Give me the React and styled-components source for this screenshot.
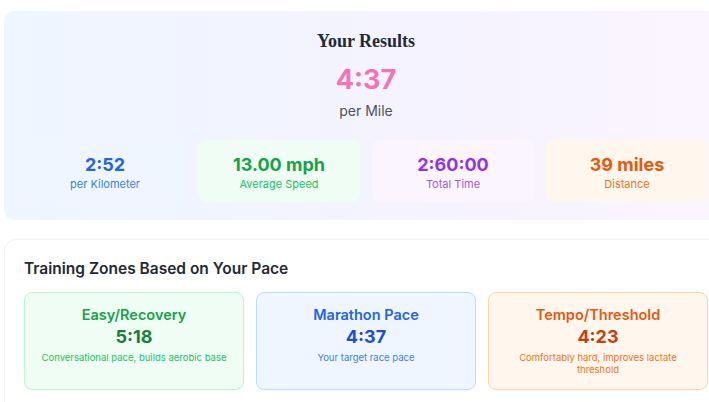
import React from "react";
import styled, { createGlobalStyle } from "styled-components";

const GlobalStyle = createGlobalStyle`
  html, body {
    margin: 0;
    padding: 0;
    background: #ffffff;
    overflow: hidden;
  }
  body {
    font-family: Inter, "Noto Sans", "Liberation Sans", sans-serif;
    -webkit-font-smoothing: antialiased;
  }
`;

const Page = styled.main`
  width: 724px;
  padding: 11px 0 0 4px;
  display: flex;
  flex-direction: column;
  gap: 19px;
`;

const ResultsCard = styled.section`
  border-radius: 10px;
  background: linear-gradient(90deg, #eff6ff 0%, #f5f3ff 60%, #fbf5ff 100%);
  padding: 18px 20px 18px;
  display: flex;
  flex-direction: column;
  align-items: center;
`;

const ResultsTitle = styled.h2`
  margin: 0;
  font-family: "Liberation Serif", "DejaVu Serif", serif;
  font-weight: 700;
  font-size: 18px;
  line-height: 24px;
  color: #1e293b;
`;

const MainPace = styled.div`
  margin-top: 9px;
  font-size: 27px;
  line-height: 36px;
  font-weight: 700;
  color: #f472b6;
`;

const MainUnit = styled.div`
  margin-top: 3px;
  font-size: 14px;
  line-height: 20px;
  color: #4b5563;
`;

const StatGrid = styled.div`
  margin-top: 19px;
  align-self: stretch;
  display: grid;
  grid-template-columns: repeat(4, 1fr);
  gap: 12px;
`;

const palette = {
  blue: { bg: "#eff6ff", border: "#bfdbfe", main: "#2563eb", dark: "#1d4ed8", soft: "#3b82f6" },
  green: { bg: "#f0fdf4", border: "#bbf7d0", main: "#16a34a", dark: "#15803d", soft: "#22c55e" },
  purple: { bg: "#faf5ff", border: "#e9d5ff", main: "#9333ea", dark: "#7e22ce", soft: "#a855f7" },
  orange: { bg: "#fff7ed", border: "#fed7aa", main: "#ea580c", dark: "#c2410c", soft: "#f97316" },
  red: { bg: "#fef2f2", border: "#fecaca", main: "#dc2626", dark: "#b91c1c", soft: "#ef4444" },
};

const StatBox = styled.div`
  height: 62px;
  border-radius: 8px;
  background: ${({ tone }) => palette[tone].bg};
  display: flex;
  flex-direction: column;
  align-items: center;
  justify-content: center;
  padding-top: 3px;
  box-sizing: border-box;
`;

const StatValue = styled.div`
  font-size: 18px;
  line-height: 22px;
  font-weight: 700;
  color: ${({ tone }) => palette[tone].main};
`;

const StatLabel = styled.div`
  font-size: 11px;
  line-height: 16px;
  color: ${({ tone }) => palette[tone].soft};
`;

const ZonesCard = styled.section`
  border: 1px solid #f1f2f4;
  border-radius: 12px;
  background: #ffffff;
  padding: 17px 19px 20px;
`;

const ZonesTitle = styled.h3`
  margin: 0 0 11px;
  font-size: 15.5px;
  line-height: 24px;
  font-weight: 600;
  color: #1f2937;
`;

const ZoneGrid = styled.div`
  display: grid;
  grid-template-columns: repeat(3, 1fr);
  gap: 12px;
`;

const ZoneCard = styled.div`
  border: 1px solid ${({ tone }) => palette[tone].border};
  background: ${({ tone }) => palette[tone].bg};
  border-radius: 8px;
  padding: 12px;
  text-align: center;
  min-height: 72px;
`;

const ZoneName = styled.div`
  font-size: 14.5px;
  line-height: 20px;
  font-weight: 600;
  color: ${({ tone }) => palette[tone].main};
`;

const ZonePace = styled.div`
  font-size: 18px;
  line-height: 24px;
  font-weight: 700;
  color: ${({ tone }) => palette[tone].dark};
`;

const ZoneNote = styled.div`
  margin-top: 3px;
  font-size: 9.5px;
  line-height: 12px;
  color: ${({ tone }) => palette[tone].soft};
`;

const stats = [
  { tone: "blue", value: "2:52", label: "per Kilometer" },
  { tone: "green", value: "13.00 mph", label: "Average Speed" },
  { tone: "purple", value: "2:60:00", label: "Total Time" },
  { tone: "orange", value: "39 miles", label: "Distance" },
];

const zones = [
  { tone: "green", name: "Easy/Recovery", pace: "5:18", note: "Conversational pace, builds aerobic base" },
  { tone: "blue", name: "Marathon Pace", pace: "4:37", note: "Your target race pace" },
  { tone: "orange", name: "Tempo/Threshold", pace: "4:23", note: "Comfortably hard, improves lactate threshold" },
  { tone: "red", name: "Interval/VO2 Max", pace: "4:05", note: "Hard efforts, boosts maximum oxygen uptake" },
];

export default function App() {
  return (
    <>
      <GlobalStyle />
      <Page>
        <ResultsCard>
          <ResultsTitle>Your Results</ResultsTitle>
          <MainPace>4:37</MainPace>
          <MainUnit>per Mile</MainUnit>
          <StatGrid>
            {stats.map((s) => (
              <StatBox key={s.label} tone={s.tone}>
                <StatValue tone={s.tone}>{s.value}</StatValue>
                <StatLabel tone={s.tone}>{s.label}</StatLabel>
              </StatBox>
            ))}
          </StatGrid>
        </ResultsCard>

        <ZonesCard>
          <ZonesTitle>Training Zones Based on Your Pace</ZonesTitle>
          <ZoneGrid>
            {zones.map((z) => (
              <ZoneCard key={z.name} tone={z.tone}>
                <ZoneName tone={z.tone}>{z.name}</ZoneName>
                <ZonePace tone={z.tone}>{z.pace}</ZonePace>
                <ZoneNote tone={z.tone}>{z.note}</ZoneNote>
              </ZoneCard>
            ))}
          </ZoneGrid>
        </ZonesCard>
      </Page>
    </>
  );
}
